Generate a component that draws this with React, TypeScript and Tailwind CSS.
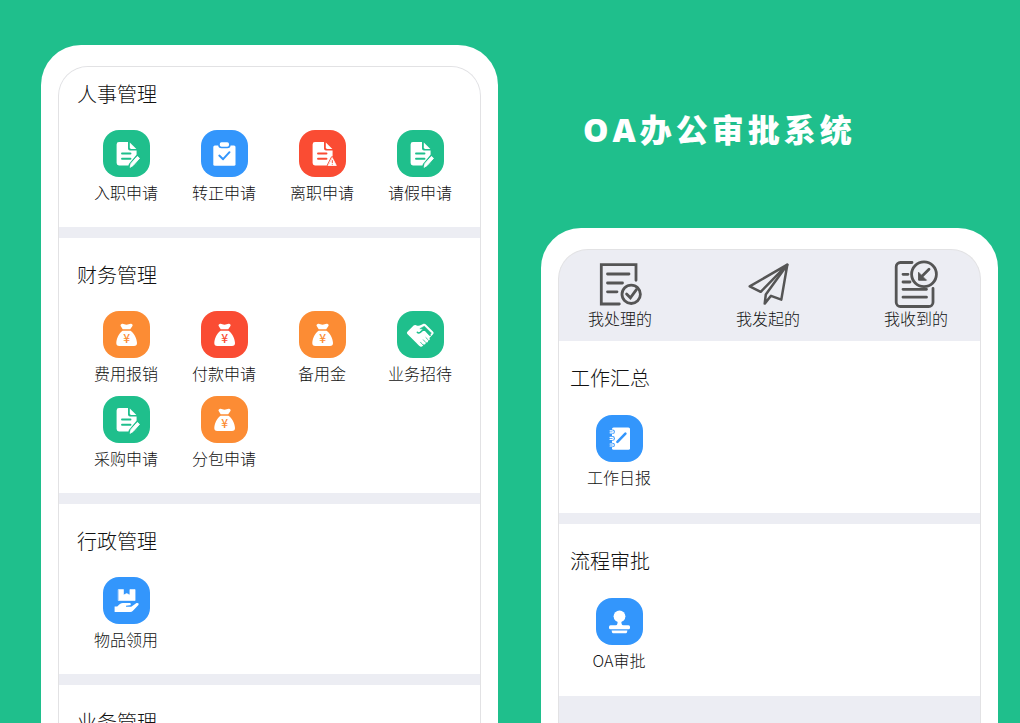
import type { ReactNode } from 'react'
import clsx from 'clsx'

type Tone = 'green' | 'blue' | 'red' | 'orange'

type AppItem = {
  label: string
  tone: Tone
  icon: ReactNode
}

const toneBg: Record<Tone, string> = {
  green: 'bg-[#1fbf8c] text-[#1fbf8c]',
  blue: 'bg-[#3396fc] text-[#3396fc]',
  red: 'bg-[#fa4c33] text-[#fa4c33]',
  orange: 'bg-[#fc8c34] text-[#fc8c34]',
}

// Tile glyphs are white; currentColor is the tile colour, used for the cut-outs.
function TileSvg({ children }: { children: ReactNode }) {
  return (
    <svg viewBox="0 0 47 47" className="size-full" fill="none" strokeLinecap="round" strokeLinejoin="round" aria-hidden="true">
      {children}
    </svg>
  )
}

function DocBody() {
  return (
    <>
      <path d="M16 12h9v6.5a2 2 0 0 0 2 2h6.6V33a2.4 2.4 0 0 1-2.4 2.4H16a2.4 2.4 0 0 1-2.4-2.4V14.4A2.4 2.4 0 0 1 16 12z" fill="#fff" />
      <path d="M26.8 12.4l6.600 6.600h-5.200a1.400 1.400 0 0 1-1.400-1.400z" fill="#fff" />
      <path d="M19 23.5h8.500M19 28.7h8.500" stroke="currentColor" strokeWidth="1.9" />
    </>
  )
}

function DocPenIcon() {
  return (
    <TileSvg>
      <DocBody />
      <path d="M28.6 35.4L35 27.8" stroke="currentColor" strokeWidth="6" />
      <path d="M27.2 37l.9-3.600 6.300-7 2.100 1.900-6.200 7z" fill="#fff" stroke="#fff" strokeWidth="0.9" />
    </TileSvg>
  )
}

function DocAlertIcon() {
  return (
    <TileSvg>
      <DocBody />
      <path d="M33.3 27.800l4 7.700h-8z" fill="#fff" stroke="currentColor" strokeWidth="3" />
      <path d="M33.3 27.800l4 7.700h-8z" fill="#fff" stroke="#fff" strokeWidth="0.8" />
      <path d="M33.3 30.6v2M33.3 34.2v.1" stroke="currentColor" strokeWidth="1" />
    </TileSvg>
  )
}

function ClipboardIcon() {
  return (
    <TileSvg>
      <rect x="12.3" y="15.5" width="22.2" height="20.2" rx="1.5" fill="#fff" />
      <rect x="18" y="11.5" width="10.8" height="6" rx="2.5" fill="#fff" stroke="currentColor" strokeWidth="1.6" />
      <path d="M18.3 25.6l3.800 3.600 6.400-7" stroke="currentColor" strokeWidth="2" />
    </TileSvg>
  )
}

function MoneyBagIcon() {
  return (
    <TileSvg>
      <path d="M18.6 13c1.8-.6 3 .7 4.900.7s3.300-1.300 5.200-.7c1.200.5 1.200 1.500.4 2.500l-1.900 2.700h-7.500l-1.700-2.700c-.8-1-.6-2.100.6-2.500z" fill="#fff" />
      <path d="M19.6 19.800h7.900c3.600 2.400 6.300 7.500 6.500 12.200.1 2-1 3-3 3H16.300c-2 0-3.100-1-3-3 .2-4.700 2.700-9.800 6.300-12.200z" fill="#fff" />
      <text x="23.6" y="31.9" textAnchor="middle" fontSize="12" fontWeight="500" fill="currentColor">
        ¥
      </text>
    </TileSvg>
  )
}

function HandshakeIcon() {
  return (
    <TileSvg>
      <path
        d="M10.600 20.600l6-6c.7-.7 1.500-.8 2.400-.4 1.700.7 3.300.8 5-.1l2-1c1-.6 2-.5 2.900.4l7 7c1 1 1 1.900.1 2.800l-3.600 3.700c1 1.400.1 2.700-1.400 2.400.3 1.600-.8 2.500-2.200 2 .1 1.600-1.100 2.400-2.400 1.900-.2 1.800-1.600 3-3.200 2.200-1.400-.7-2.800-2.600-4-3.800l-8.600-8.400c-.9-.9-.9-1.800 0-2.700z"
        fill="#fff"
      />
      <path d="M20.300 21.300c.8 1 1.800 1 2.900.1l4-3.500 5.900 6.400" stroke="currentColor" strokeWidth="1.5" />
      <path d="M23.200 17.500l4.200-2.300 7 7-2 1.900-5-5.500z" fill="currentColor" stroke="currentColor" strokeWidth="0.6" />
      <path d="M23.500 31.2l2.200 2.500M26.300 28.800l2.300 2.500M28.900 26.600l2.200 2.200" stroke="currentColor" strokeWidth="0.8" />
    </TileSvg>
  )
}

function HandBoxIcon() {
  return (
    <TileSvg>
      <path d="M15.6 12.6h4.900V18l3.200-1.500 3.200 1.500v-5.400h5.200V23.500H15.600z" fill="#fff" stroke="#fff" strokeWidth="0.6" />
      <path d="M11.6 29.6h2.600c1.800-2.200 3.500-3.700 5.800-3.700h6.400c1.800 0 2 2.200.2 2.400l-3.600.5v.9h5.200l4.600-3.200c1.700-1 3.700-.1 2.600 1.400l-5.700 6c-.7.7-1.400 1-2.400 1H11.600z" fill="#fff" />
    </TileSvg>
  )
}

function NotebookIcon() {
  return (
    <TileSvg>
      <rect x="16" y="12.4" width="18" height="22.4" rx="1.6" fill="#fff" />
      {[16.8, 23.4, 30].map((y) => (
        <g key={y}>
          <circle cx="16.6" cy={y} r="2.3" fill="currentColor" />
          <path d={`M14.1 ${y - 1}h2.200a1 1 0 0 1 0 2h-2.200`} stroke="#fff" strokeWidth="1.2" />
        </g>
      ))}
      <path d="M21.4 26.8l8-8.100" stroke="currentColor" strokeWidth="2.6" />
    </TileSvg>
  )
}

function StampIcon() {
  return (
    <TileSvg>
      <circle cx="23.5" cy="18.3" r="5.9" fill="#fff" />
      <path d="M21.7 22h3.600c-.1 3 .3 5.400 2.200 6h-8c1.900-.6 2.300-3 2.200-6z" fill="#fff" />
      <rect x="13" y="27.3" width="21" height="3.9" rx="1.5" fill="#fff" />
      <path d="M15.6 32.4h15.800l-.4 1.900a1.200 1.200 0 0 1-1.200 1H17.200a1.200 1.200 0 0 1-1.200-1z" fill="#fff" />
    </TileSvg>
  )
}

function LineSvg({ children }: { children: ReactNode }) {
  return (
    <svg
      viewBox="0 0 48 48"
      className="size-12 text-[#555]"
      fill="none"
      stroke="currentColor"
      strokeWidth="2.8"
      strokeLinecap="round"
      aria-hidden="true"
    >
      {children}
    </svg>
  )
}

function HandledIcon() {
  return (
    <LineSvg>
      <path d="M40 20.3V4.7H5.3V44h18" />
      <path d="M11.5 14h21.500M11.5 23h15M11.5 31.8h9.500" />
      <circle cx="35.2" cy="34.3" r="9.2" />
      <path d="M30.6 34l3.800 3.800 6-8.200" />
    </LineSvg>
  )
}

function SentIcon() {
  return (
    <LineSvg>
      <g strokeWidth="2.5" strokeLinejoin="round">
        <path d="M43.3 4.7L5.7 26.4l11 5.400z" />
        <path d="M43.3 4.7L21.8 34.5l-1.100 9.100 6.300-7.800 10.300 3.800z" />
      </g>
    </LineSvg>
  )
}

function ReceivedIcon() {
  return (
    <LineSvg>
      <path d="M20 2.5H8.500A4.300 4.300 0 0 0 4.2 6.800v35.400a4.300 4.300 0 0 0 4.300 4.300h28.200a4.300 4.300 0 0 0 4.300-4.300V28.500" />
      <path d="M11 14.3h5M11 22h7M11 29.3h23.500M11 37.2h23.500" />
      <circle cx="32" cy="14.3" r="12.4" />
      <path d="M37 9.3l-6.500 6.500" />
      <path d="M26.6 12.7v7.500h7.500z" fill="currentColor" strokeWidth="1" strokeLinejoin="round" />
    </LineSvg>
  )
}

const hrItems: AppItem[] = [
  { label: '入职申请', tone: 'green', icon: <DocPenIcon /> },
  { label: '转正申请', tone: 'blue', icon: <ClipboardIcon /> },
  { label: '离职申请', tone: 'red', icon: <DocAlertIcon /> },
  { label: '请假申请', tone: 'green', icon: <DocPenIcon /> },
]

const financeItems: AppItem[] = [
  { label: '费用报销', tone: 'orange', icon: <MoneyBagIcon /> },
  { label: '付款申请', tone: 'red', icon: <MoneyBagIcon /> },
  { label: '备用金', tone: 'orange', icon: <MoneyBagIcon /> },
  { label: '业务招待', tone: 'green', icon: <HandshakeIcon /> },
  { label: '采购申请', tone: 'green', icon: <DocPenIcon /> },
  { label: '分包申请', tone: 'orange', icon: <MoneyBagIcon /> },
]

const adminItems: AppItem[] = [{ label: '物品领用', tone: 'blue', icon: <HandBoxIcon /> }]
const reportItems: AppItem[] = [{ label: '工作日报', tone: 'blue', icon: <NotebookIcon /> }]
const flowItems: AppItem[] = [{ label: 'OA审批', tone: 'blue', icon: <StampIcon /> }]

const inboxTabs = [
  { label: '我处理的', icon: <HandledIcon /> },
  { label: '我发起的', icon: <SentIcon /> },
  { label: '我收到的', icon: <ReceivedIcon /> },
]

function Phone({ children }: { children: ReactNode }) {
  return (
    <div className="flex min-h-0 flex-1 flex-col rounded-t-[40px] bg-white px-[17px] pt-[21px]">
      <div className="flex-1 overflow-hidden rounded-t-[30px] border border-b-0 border-[#e2e2e4] bg-[#ecedf3]">
        {children}
      </div>
    </div>
  )
}

type SectionProps = {
  title: string
  items?: AppItem[]
  className: string
}

function Section({ title, items = [], className }: SectionProps) {
  return (
    <section className={clsx('flex flex-col bg-white', className)}>
      <h2 className="text-xl leading-7">{title}</h2>
      <div className="grid grid-cols-4 gap-y-3">
        {items.map((item) => (
          <button key={item.label} type="button" className="flex flex-col items-center gap-1">
            <span className={clsx('size-[47px] rounded-[16px]', toneBg[item.tone])}>{item.icon}</span>
            <span className="text-base leading-[22px]">{item.label}</span>
          </button>
        ))}
      </div>
    </section>
  )
}

export default function App() {
  return (
    <main className="flex h-screen gap-[43px] overflow-hidden bg-[#1fbf8c] pr-[22px] pl-[41px] font-['Noto_Sans_CJK_SC',sans-serif] font-light text-[#111]">
      <div className="flex min-w-0 flex-1 flex-col pt-[45px]">
        <Phone>
          <div className="flex flex-col gap-[11px]">
            <Section title="人事管理" items={hrItems} className="gap-[22px] pt-[13px] pr-[11px] pb-6 pl-[18px]" />
            <Section title="财务管理" items={financeItems} className="gap-[22px] pt-[23px] pr-[11px] pb-6 pl-[18px]" />
            <Section title="行政管理" items={adminItems} className="gap-[22px] pt-[23px] pr-[11px] pb-6 pl-[18px]" />
            <Section title="业务管理" className="gap-[22px] pt-[23px] pr-[11px] pb-6 pl-[18px]" />
          </div>
        </Phone>
      </div>

      <div className="flex min-w-0 flex-1 flex-col pt-[106px]">
        <h1 className="mb-[74px] pl-[42px] font-['Open_Sans','Noto_Sans_CJK_SC',sans-serif] text-[32px] leading-[48px] font-extrabold tracking-[4px] whitespace-nowrap text-white">
          OA办公审批系统
        </h1>
        <Phone>
          <nav className="flex justify-between pt-2.5 pr-8 pb-3 pl-[29px]">
            {inboxTabs.map((tab) => (
              <button key={tab.label} type="button" className="flex flex-col items-center">
                {tab.icon}
                <span className="text-base leading-[21px]">{tab.label}</span>
              </button>
            ))}
          </nav>
          <div className="flex flex-col gap-[11px]">
            <Section title="工作汇总" items={reportItems} className="gap-[23px] pt-[23px] pr-[18px] pb-[25px] pl-[11px]" />
            <Section title="流程审批" items={flowItems} className="gap-[23px] pt-[23px] pr-[18px] pb-[25px] pl-[11px]" />
          </div>
        </Phone>
      </div>
    </main>
  )
}
